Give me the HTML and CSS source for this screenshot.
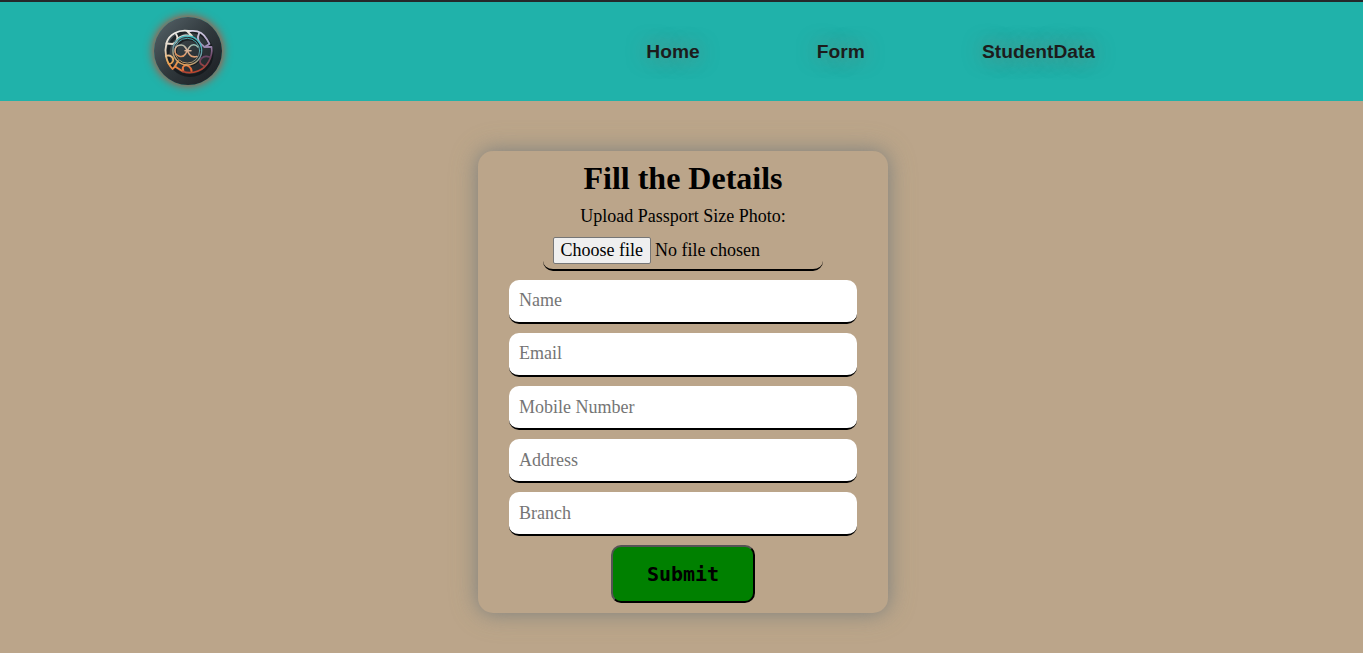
FILE: index.html
```html
<!DOCTYPE html>
<html lang="en">
<head>
<meta charset="utf-8">
<title>Student Form</title>
<link rel="stylesheet" href="styles.css">
</head>
<body>
<header class="navbar">
  <a class="logo" href="#">
    <svg viewBox="0 0 68 68" width="68" height="68" fill="none" stroke-linecap="round" stroke-linejoin="round">
      <defs>
        <linearGradient id="disc" x1="0" y1="0" x2="1" y2="1">
          <stop offset="0" stop-color="#58656b"/><stop offset=".5" stop-color="#30383c"/><stop offset="1" stop-color="#191c20"/>
        </linearGradient>
        <linearGradient id="rim" gradientUnits="userSpaceOnUse" x1="24" y1="12" x2="38" y2="56">
          <stop offset="0" stop-color="#eef0ee"/><stop offset=".35" stop-color="#e2d2c0"/><stop offset=".62" stop-color="#e9a757"/><stop offset="1" stop-color="#e2572d"/>
        </linearGradient>
        <linearGradient id="side" gradientUnits="userSpaceOnUse" x1="42" y1="12" x2="48" y2="54">
          <stop offset="0" stop-color="#dcd8ea"/><stop offset=".4" stop-color="#a394bd"/><stop offset=".7" stop-color="#69405f"/><stop offset="1" stop-color="#b9452f"/>
        </linearGradient>
        <linearGradient id="ring" gradientUnits="userSpaceOnUse" x1="38" y1="19" x2="28" y2="48">
          <stop offset="0" stop-color="#42c0c4"/><stop offset=".5" stop-color="#6b9ba4"/><stop offset="1" stop-color="#e6a058"/>
        </linearGradient>
        <linearGradient id="eyes" gradientUnits="userSpaceOnUse" x1="36" y1="26" x2="32" y2="41">
          <stop offset="0" stop-color="#8fc0b8"/><stop offset=".5" stop-color="#d8b49a"/><stop offset="1" stop-color="#e09058"/>
        </linearGradient>
      </defs>
      <circle cx="34" cy="34" r="34" fill="url(#disc)"/>
      <g stroke="#101316" stroke-width="3" opacity=".7">
        <circle cx="36" cy="36.500" r="22"/><circle cx="34.500" cy="35" r="13"/>
      </g>
      <g stroke="url(#rim)" stroke-width="1.800">
        <path d="M36 14 34.500 14C24 12.500 15 17.500 12.500 26 10 35 12 45 18.500 52L21 49.500 29 54.500 29 52"/>
        <path d="M33 14 38 19 32.500 18.500C29 18.200 26 20 23.500 22"/>
        <path d="M22 17C25 21 23 26 18.500 27L12.500 26.500"/>
        <path d="M11.800 39C16 37.500 20 40 19 44 18 46.500 16 47.500 14.500 46.500"/>
        <path d="M29.500 54C27 50 31 46.500 35 49.500 37 51 38 53 37.500 55"/>
        <path d="M21 49.500 24 44"/>
      </g>
      <g stroke="url(#side)" stroke-width="1.800">
        <path d="M36 14C44 13 50 17 53 22.500L55.500 27 50.500 30 57.500 30C59 40 53 51 44 54 39 56 33 56 29 54.500"/>
        <path d="M45 16.500C42 22 46 27 50.500 30"/>
        <path d="M55.500 40C49 37.500 44 43 47 47L50 49"/>
      </g>
      <g stroke="url(#ring)">
        <circle cx="33.300" cy="33.500" r="14.400" stroke-width="1.500"/>
        <circle cx="33.300" cy="33.700" r="12.400" stroke-width=".9"/>
      </g>
      <g stroke="url(#eyes)" stroke-width="1.500">
        <path d="M31.500 30.500C29 26.500 21 27.500 21 33.800 21 40 29 41 31.500 37 33 34 34 32 35.500 30 38 26.500 42 27.500 44 30"/>
        <path d="M31.500 30.500C33 33 34 35.500 35.500 37.500 37.500 40.500 41 40 43 39.500M31 33.800H37"/>
      </g>
    </svg>
  </a>
  <nav class="links">
    <a class="link" href="#">Home</a>
    <a class="link" href="#">Form</a>
    <a class="link" href="#">StudentData</a>
  </nav>
</header>
<main class="page">
  <form class="card">
    <h1 class="title">Fill the Details</h1>
    <p class="caption">Upload Passport Size Photo:</p>
    <div class="file"><span class="choose">Choose file</span><span class="chosen">No file chosen</span></div>
    <input class="field raised" type="text" placeholder="Name">
    <input class="field raised" type="email" placeholder="Email">
    <input class="field" type="text" placeholder="Mobile Number">
    <input class="field" type="text" placeholder="Address">
    <input class="field" type="text" placeholder="Branch">
    <button class="submit" type="button">Submit</button>
  </form>
</main>
</body>
</html>
```
FILE: styles.css
```css
* { box-sizing: border-box; }
body {
  margin: 0;
  height: 653px;
  overflow: hidden;
  background: #bba58a;
  font-family: "Liberation Serif", serif;
}
.navbar {
  display: flex;
  align-items: center;
  height: 101px;
  padding: 0 268px 0 154px;
  justify-content: space-between;
  border-top: 2px solid #25282b;
  background: #20b2aa;
}
.logo {
  display: block;
  width: 68px;
  height: 68px;
  margin-bottom: 1px;
  border-radius: 50%;
  box-shadow: 0 0 10px 1px #c8452f;
}
.logo svg { display: block; }
.links { display: flex; gap: 117.2px; }
.link {
  color: #1c1c1c;
  font: bold 19.2px/22px "Liberation Sans", sans-serif;
  text-decoration: none;
  text-shadow: 0 0 20px rgba(190, 90, 75, .5);
}
.page { display: flex; justify-content: center; padding: 50px 0 0 3px; }
.card {
  display: flex;
  flex-direction: column;
  align-items: center;
  width: 410px;
  height: 462px;
  padding-top: 9px;
  border-radius: 15px;
  box-shadow: 0 0 20px #808080, 0 0 30px rgba(160, 160, 120, .3);
}
.title { margin: 0; font-size: 32px; line-height: 37px; }
.caption { margin: 9px 0 0; font-size: 18px; line-height: 21px; }
.file {
  display: flex;
  align-items: flex-start;
  gap: 4px;
  width: 280px;
  height: 44px;
  margin-bottom: 9px;
  padding: 10px 10px 0;
  border-bottom: 2px solid #000;
  border-radius: 10px;
  font-size: 18px;
  line-height: 21px;
}
.choose {
  width: 98px;
  height: 27px;
  padding-right: .4px;
  border: 1px solid #767676;
  border-radius: 2px;
  background: #efefef;
  line-height: 25px;
  text-align: center;
}
.chosen { line-height: 27px; }
.field {
  width: 348px;
  height: 44px;
  margin-bottom: 9.1px;
  padding: 0 10px;
  border: 0;
  border-bottom: 2px solid #000;
  border-radius: 10px;
  background: #fff;
  font: 18px "Liberation Serif", serif;
}
.raised { padding-bottom: 2px; }
.field::placeholder { color: #757575; }
.submit {
  width: 144px;
  height: 58px;
  padding: 0;
  border: 2px outset #000;
  border-radius: 10px;
  background: #008000;
  color: #000;
  font: bold 20px "DejaVu Sans Mono", monospace;
}
```
